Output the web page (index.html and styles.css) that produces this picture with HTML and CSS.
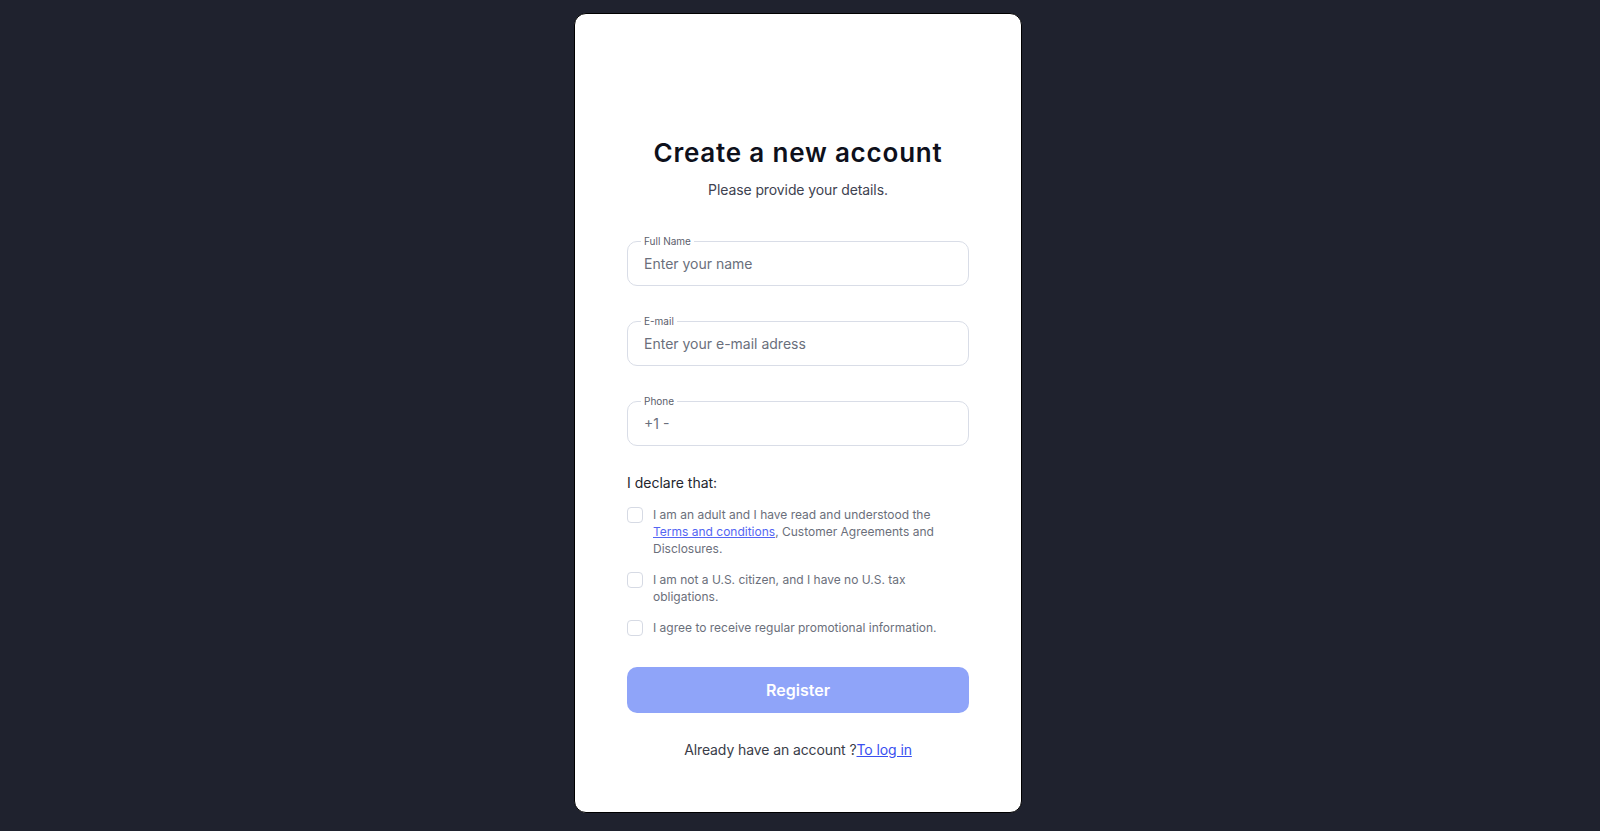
FILE: index.html
```html
<!DOCTYPE html>
<html lang="en">
<head>
  <meta charset="UTF-8">
  <title>Create a new account</title>
  <link rel="stylesheet" href="styles.css">
</head>
<body>

  <!-- 회원가입 카드 -->
  <div class="card">
    <h1 class="title">Create a new account</h1>
    <p class="subtitle">Please provide your details.</p>

    <form class="signup-form" onsubmit="return false">
      <div class="field">
        <label for="fullname">Full Name</label>
        <input type="text" id="fullname" placeholder="Enter your name">
      </div>
      <div class="field">
        <label for="email">E-mail</label>
        <input type="email" id="email" placeholder="Enter your e-mail adress">
      </div>
      <div class="field">
        <label for="phone">Phone</label>
        <input type="tel" id="phone" placeholder="+1 -">
      </div>

      <p class="declare">I declare that:</p>
      <div class="checks">
        <label class="check-row">
          <input type="checkbox"><span class="box"></span>
          <span class="check-text">I am an adult and I have read and understood the <a href="#">Terms and conditions</a>, Customer Agreements and Disclosures.</span>
        </label>
        <label class="check-row">
          <input type="checkbox"><span class="box"></span>
          <span class="check-text">I am not a U.S. citizen, and I have no U.S. tax obligations.</span>
        </label>
        <label class="check-row">
          <input type="checkbox"><span class="box"></span>
          <span class="check-text">I agree to receive regular promotional information.</span>
        </label>
      </div>

      <button class="register-btn" type="submit">Register</button>
    </form>

    <p class="login-link">Already have an account ?<a href="#">To log in</a></p>
  </div>

</body>
</html>
```

FILE: styles.css
```css
/* ─── 공통 ─── */
* { box-sizing: border-box; margin:0; padding:0; }
body, html { height:100%; }
body {
  background:#1f222e;
  font-family: Inter, "Noto Sans", Arial, sans-serif;
  display:flex; justify-content:center;
  padding:13px 4px 0 0;
}

/* ─── 카드 ─── */
.card {
  width:448px; height:800px;
  background:#fff;
  border:1px solid #000;
  border-radius:12px;
  padding:123px 52px 0;
}
.title {
  font-size:26px; line-height:32px; font-weight:600;
  letter-spacing:0.8px;
  color:#0e101b; text-align:center;
}
.subtitle {
  margin-top:11px;
  font-size:14px; line-height:20px; letter-spacing:-0.1px;
  color:#3e4250; text-align:center;
}

/* 입력 필드 */
.signup-form { margin-top:41px; }
.field {
  position:relative;
  height:45px; margin-bottom:35px;
  border:1px solid #d9dde7; border-radius:10px;
  display:flex; align-items:center;
  padding:0 16px;
}
.field label {
  position:absolute; top:-7px; left:13px;
  padding:0 3px; background:#fff;
  font-size:10px; line-height:12px; color:#5b606c;
}
.field input {
  width:100%; border:none; outline:none;
  font-family:inherit; font-size:14px; color:#333;
  background:transparent;
}
.field input::placeholder { color:#6a6f7c; }

/* 동의 체크박스 */
.declare {
  margin-top:-8px;
  font-size:14px; line-height:20px; color:#24262e;
}
.checks {
  margin-top:13px;
  display:flex; flex-direction:column; gap:14px;
}
.check-row {
  display:flex; align-items:flex-start; gap:10px;
  cursor:pointer;
}
.check-row input { display:none; }
.check-row .box {
  flex:none;
  width:16px; height:16px; margin-top:1px;
  border:1px solid #d6dae4; border-radius:4px;
}
.check-row input:checked + .box { background:#8fa3f8; border-color:#8fa3f8; }
.check-text {
  font-size:12px; line-height:17px; color:#6b6f7b;
}
.check-text a { color:#5466f3; }

/* 버튼 */
.register-btn {
  display:block; width:100%; height:46px;
  margin-top:31px;
  border:none; border-radius:10px;
  background:#8fa4f9; color:#fff;
  font-family:inherit; font-size:16px; font-weight:600;
  cursor:pointer;
}

.login-link {
  margin-top:27px;
  font-size:14px; line-height:20px; letter-spacing:-0.1px;
  color:#3a3d48; text-align:center;
}
.login-link a { color:#3a4ff0; }
```
